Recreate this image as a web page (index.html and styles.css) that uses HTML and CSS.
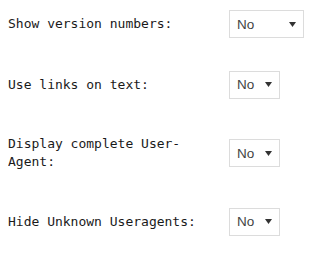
FILE: index.html
```html
<!DOCTYPE html>
<html lang="en">
<head>
  <meta charset="UTF-8">
  <title>Settings</title>
  <link rel="stylesheet" href="styles.css">
</head>
<body>
  <div class="settings">
    <div class="row">
      <label class="label" for="versions">Show version numbers:</label>
      <div class="select wide" id="versions">
        <span>No</span>
        <svg class="arrow" width="7" height="5" viewBox="0 0 7 5"><path d="M0 0H7L3.5 5Z"/></svg>
      </div>
    </div>
    <div class="row">
      <label class="label" for="links">Use links on text:</label>
      <div class="select" id="links">
        <span>No</span>
        <svg class="arrow" width="7" height="5" viewBox="0 0 7 5"><path d="M0 0H7L3.5 5Z"/></svg>
      </div>
    </div>
    <div class="row">
      <label class="label" for="fullua">Display complete User-Agent:</label>
      <div class="select" id="fullua">
        <span>No</span>
        <svg class="arrow" width="7" height="5" viewBox="0 0 7 5"><path d="M0 0H7L3.5 5Z"/></svg>
      </div>
    </div>
    <div class="row">
      <label class="label" for="hideua">Hide Unknown Useragents:</label>
      <div class="select" id="hideua">
        <span>No</span>
        <svg class="arrow" width="7" height="5" viewBox="0 0 7 5"><path d="M0 0H7L3.5 5Z"/></svg>
      </div>
    </div>
  </div>
</body>
</html>
```

FILE: styles.css
```css
body {
  margin: 8px;
  background-color: #ffffff;
}

.settings {
  display: flex;
  flex-direction: column;
  gap: 32.5px;
  padding-top: 2px;
}

.row {
  display: flex;
  align-items: center;
}

.label {
  width: 200px;
  margin-right: 21px;
  padding: 4px 0;
  font-family: "DejaVu Sans Mono", monospace;
  font-size: 13px;
  line-height: 18px;
  color: #1a1a1a;
}

/* fake select box */
.select {
  box-sizing: border-box;
  width: 51px;
  height: 28px;
  display: flex;
  align-items: center;
  justify-content: space-between;
  padding: 0 7px 0 7px;
  border: 1px solid #dcdcdc;
  background-color: #fff;
  font-family: "Liberation Sans", Arial, sans-serif;
  font-size: 13.5px;
  color: #444;
}

.select.wide {
  width: 75px;
}

.arrow {
  fill: #333;
}
```
